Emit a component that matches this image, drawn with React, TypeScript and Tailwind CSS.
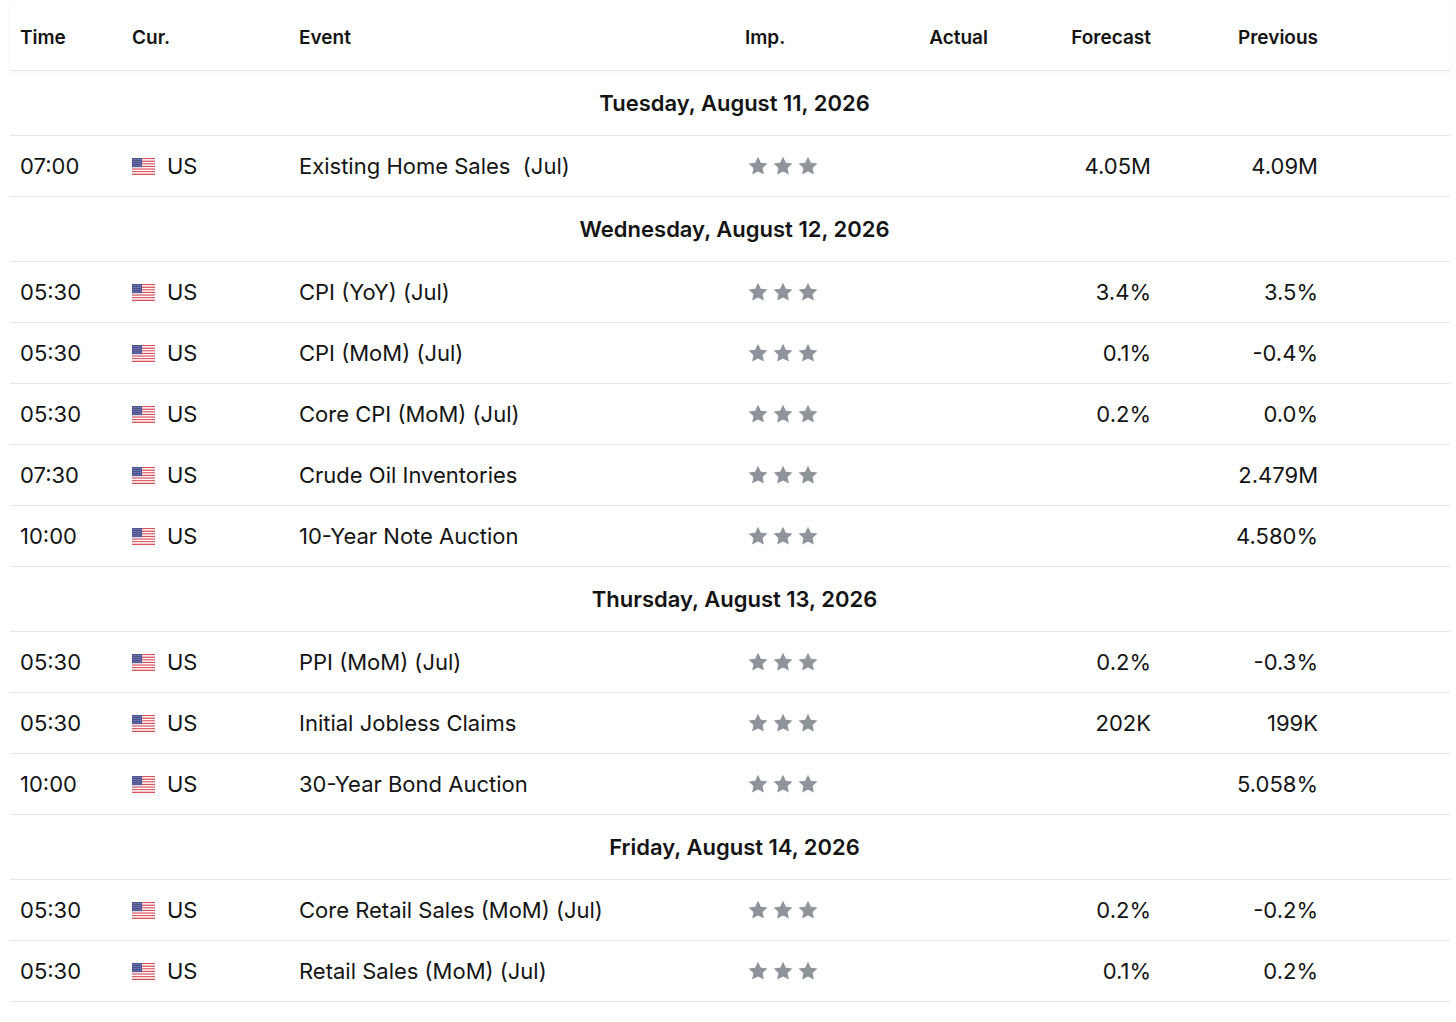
import React from 'react';

type Row = {
  time: string;
  event: string;
  actual?: string;
  forecast?: string;
  previous?: string;
};

type Day = {
  date: string;
  rows: Row[];
};

const days: Day[] = [
  {
    date: 'Tuesday, August 11, 2026',
    rows: [{ time: '07:00', event: 'Existing Home Sales\u00a0\u00a0(Jul)', forecast: '4.05M', previous: '4.09M' }],
  },
  {
    date: 'Wednesday, August 12, 2026',
    rows: [
      { time: '05:30', event: 'CPI (YoY) (Jul)', forecast: '3.4%', previous: '3.5%' },
      { time: '05:30', event: 'CPI (MoM) (Jul)', forecast: '0.1%', previous: '-0.4%' },
      { time: '05:30', event: 'Core CPI (MoM) (Jul)', forecast: '0.2%', previous: '0.0%' },
      { time: '07:30', event: 'Crude Oil Inventories', previous: '2.479M' },
      { time: '10:00', event: '10-Year Note Auction', previous: '4.580%' },
    ],
  },
  {
    date: 'Thursday, August 13, 2026',
    rows: [
      { time: '05:30', event: 'PPI (MoM) (Jul)', forecast: '0.2%', previous: '-0.3%' },
      { time: '05:30', event: 'Initial Jobless Claims', forecast: '202K', previous: '199K' },
      { time: '10:00', event: '30-Year Bond Auction', previous: '5.058%' },
    ],
  },
  {
    date: 'Friday, August 14, 2026',
    rows: [
      { time: '05:30', event: 'Core Retail Sales (MoM) (Jul)', forecast: '0.2%', previous: '-0.2%' },
      { time: '05:30', event: 'Retail Sales (MoM) (Jul)', forecast: '0.1%', previous: '0.2%' },
    ],
  },
];

const cols = 'grid grid-cols-[112px_167px_446px_135px_128px_163px_167px_122px]';

const UsFlag = () => (
  <svg width="23" height="17" viewBox="0 0 23 17" className="shrink-0">
    {Array.from({ length: 13 }).map((_, i) => (
      <rect key={i} x="0" y={(i * 17) / 13} width="23" height={17 / 13 + 0.05} fill={i % 2 === 0 ? '#d9505a' : '#ffffff'} />
    ))}
    <rect x="0" y="0" width="10" height="9.2" fill="#4a4f8f" />
    {Array.from({ length: 4 }).map((_, r) =>
      Array.from({ length: 5 }).map((_, c) => (
        <circle key={`${r}-${c}`} cx={1.2 + c * 1.9} cy={1.3 + r * 2.2} r="0.45" fill="#d9dbef" />
      ))
    )}
  </svg>
);

const Star = () => (
  <svg width="22" height="22" viewBox="0 0 24 24">
    <path
      d="M12 1.8l3.1 6.6 7.2.9-5.3 5 1.4 7.1L12 17.9l-6.4 3.5 1.4-7.1-5.3-5 7.2-.9z"
      fill="#8f949c"
    />
  </svg>
);

const App: React.FC = () => {
  return (
    <div className="w-[1456px] min-h-[1022px] bg-white text-[#141414]" style={{ fontFamily: 'Inter, "Noto Sans", sans-serif' }}>
      <div className="ml-[10px] w-[1440px]">
        <div className={`${cols} h-[71px] items-center pt-[7px] border-b border-[#e3e7ec] shadow-[0_3px_6px_rgba(15,23,42,0.04)] text-[19px] font-semibold`}>
          <div className="pl-[10px]">Time</div>
          <div className="pl-[10px]">Cur.</div>
          <div className="pl-[10px]">Event</div>
          <div className="pl-[10px]">Imp.</div>
          <div className="pr-[10px] text-right">Actual</div>
          <div className="pr-[10px] text-right">Forecast</div>
          <div className="pr-[10px] text-right">Previous</div>
          <div />
        </div>
        {days.map((day) => (
          <div key={day.date}>
            <div className="h-[65px] flex items-center justify-center pl-[9px] border-b border-[#e3e7ec] text-[22px] font-semibold">
              {day.date}
            </div>
            {day.rows.map((row, i) => (
              <div key={i} className={`${cols} h-[61px] items-center border-b border-[#e3e7ec] text-[22px]`}>
                <div className="pl-[10px]">{row.time}</div>
                <div className="pl-[10px] flex items-center gap-[12px]">
                  <UsFlag />
                  <span>US</span>
                </div>
                <div className="pl-[10px] whitespace-nowrap">{row.event}</div>
                <div className="pl-[12px] flex items-center gap-[3px]">
                  <Star />
                  <Star />
                  <Star />
                </div>
                <div className="pr-[10px] text-right">{row.actual ?? ''}</div>
                <div className="pr-[10px] text-right">{row.forecast ?? ''}</div>
                <div className="pr-[10px] text-right">{row.previous ?? ''}</div>
                <div />
              </div>
            ))}
          </div>
        ))}
      </div>
    </div>
  );
};

export default App;
